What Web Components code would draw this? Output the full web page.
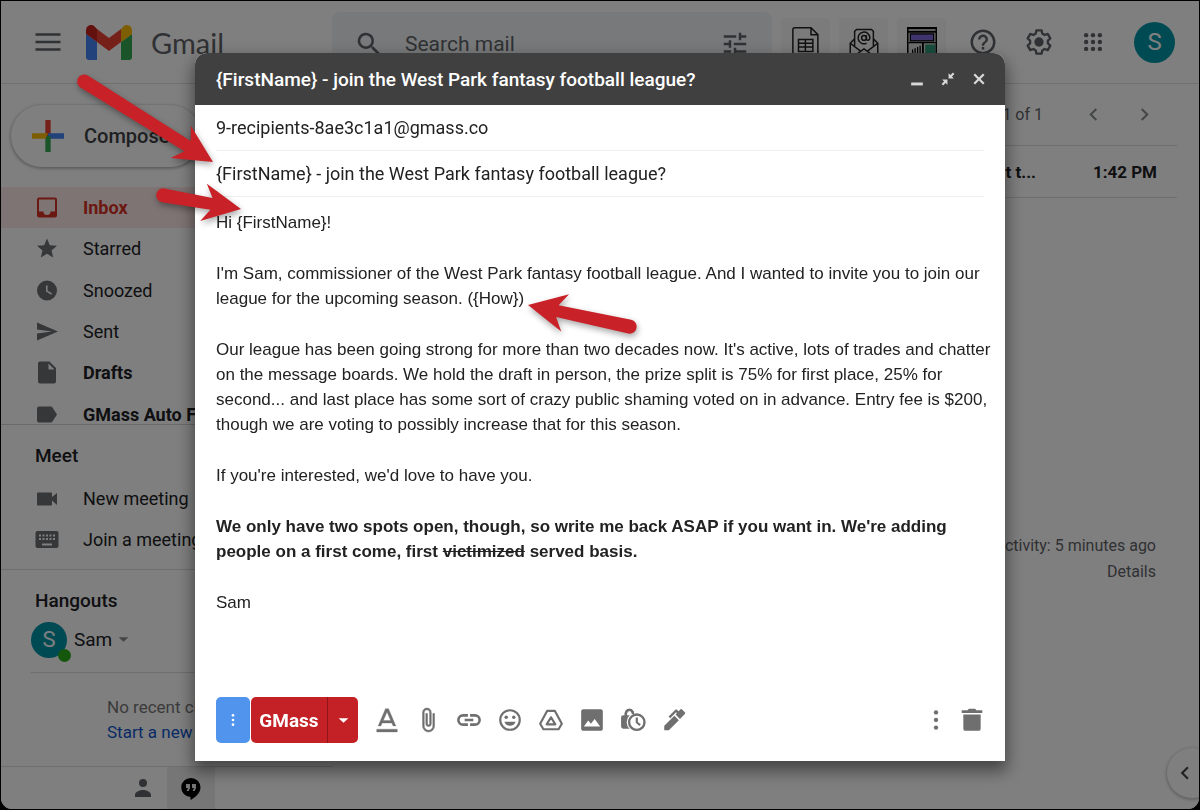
<!DOCTYPE html>
<html lang="en">
<head>
<meta charset="utf-8">
<meta name="viewport" content="width=device-width, initial-scale=1">
<title>Gmail</title>
<style>
  html, body { height: 100%; margin: 0; background: #000; }
  body { font-family: Roboto, "Liberation Sans", sans-serif; font-size: 18px; color: #202124; }
</style>
</head>
<body>
<mail-app>
  <app-header slot="header"></app-header>
  <side-bar slot="side"></side-bar>
  <mail-list slot="main"></mail-list>
  <compose-window slot="overlay" heading="{FirstName} - join the West Park fantasy football league?" to="9-recipients-8ae3c1a1@gmass.co">
    <p>Hi {FirstName}!</p>
    <p>I'm Sam, commissioner of the West Park fantasy football league. And I wanted to invite you to join our league for the upcoming season. ({How})</p>
    <p>Our league has been going strong for more than two decades now. It's active, lots of trades and chatter on the message boards. We hold the draft in person, the prize split is 75% for first place, 25% for second... and last place has some sort of crazy public shaming voted on in advance. Entry fee is $200, though we are voting to possibly increase that for this season.</p>
    <p>If you're interested, we'd love to have you.</p>
    <p><b>We only have two spots open, though, so write me back ASAP if you want in. We're adding people on a first come, first <s>victimized</s> served basis.</b></p>
    <p>Sam</p>
  </compose-window>
  <pointer-arrows slot="overlay"></pointer-arrows>
</mail-app>

<script>
const ICONS = {
  menu: '<path d="M2 5h20v2H2zM2 11h20v2H2zM2 17h20v2H2z"/>',
  search: '<path d="M15.500 14h-.8l-.3-.3A6.500 6.500 0 1 0 13.700 14.400l.3.3v.8l5 5 1.500-1.500zM9.500 14a4.500 4.500 0 1 1 0-9 4.500 4.500 0 0 1 0 9z"/>',
  tune: '<path d="M3 17v2h6v-2H3zM3 5v2h10V5H3zm10 16v-2h8v-2h-8v-2h-2v6h2zM7 9v2H3v2h4v2h2V9H7zm14 4v-2H11v2h10zm-6-4h2V7h4V5h-4V3h-2v6z"/>',
  help: '<path d="M11 18h2v-2h-2v2zm1-16a10 10 0 1 0 0 20 10 10 0 0 0 0-20zm0 18a8 8 0 1 1 0-16 8 8 0 0 1 0 16zm0-14a4 4 0 0 0-4 4h2a2 2 0 1 1 4 0c0 2-3 1.750-3 5h2c0-2.250 3-2.500 3-5a4 4 0 0 0-4-4z"/>',
  gear: '<g transform="translate(0 -1)"><path fill="none" stroke="currentColor" stroke-width="2" stroke-linejoin="round" d="M9.800 3h4.400l.6 2.800 2 1.200 2.700-.9 2.200 3.800-2.100 1.900v2.400l2.100 1.900-2.200 3.800-2.700-.9-2 1.200-.6 2.800H9.800l-.6-2.800-2-1.200-2.700.9-2.200-3.800 2.100-1.900v-2.400L2.300 9.900l2.200-3.800 2.700.9 2-1.200z"/><circle cx="12" cy="13" r="4"/></g>',
  apps: '<circle cx="4.500" cy="4.500" r="2.400"/><circle cx="12" cy="4.500" r="2.400"/><circle cx="19.500" cy="4.500" r="2.400"/><circle cx="4.500" cy="12" r="2.400"/><circle cx="12" cy="12" r="2.400"/><circle cx="19.500" cy="12" r="2.400"/><circle cx="4.500" cy="19.500" r="2.400"/><circle cx="12" cy="19.500" r="2.400"/><circle cx="19.500" cy="19.500" r="2.400"/>',
  inbox: '<path d="M20 2H4a2 2 0 0 0-2 2v16c0 1.100.9 2 2 2h16a2 2 0 0 0 2-2V4a2 2 0 0 0-2-2zm0 14h-4.500a3.500 3.500 0 0 1-7 0H4V4h16z"/>',
  star: '<path d="M12 17.300 18.200 21l-1.640-7.030L22 9.240l-7.190-.61L12 2 9.190 8.630 2 9.240l5.460 4.730L5.820 21z"/>',
  clock: '<path d="M12 2a10 10 0 1 0 0 20 10 10 0 0 0 0-20zm4.200 14.200L11 13V7h1.600v5.200l4.400 2.600z"/>',
  send: '<path d="M2 21 23 12 2 3v7l15 2-15 2z"/>',
  draft: '<path d="M5 1a2 2 0 0 0-2 2v18c0 1.100.9 2 2 2h14a2 2 0 0 0 2-2V7.500L14.500 1zm8.500 8V3l6 6z"/>',
  label: '<path d="M17.600 5.200A2 2 0 0 0 16 4H4a2 2 0 0 0-2 2v12c0 1.100.9 2 2 2h12a2 2 0 0 0 1.600-1.200L22 12z"/>',
  video: '<path d="M17 10.500V7a1 1 0 0 0-1-1H3a1 1 0 0 0-1 1v11c0 .55.45 1 1 1h13a1 1 0 0 0 1-1v-4l5 4.500v-12z"/>',
  keyboard: '<path d="M21.500 3.500h-19A2 2 0 0 0 .5 5.500v13c0 1.100.9 2 2 2h19a2 2 0 0 0 2-2v-13a2 2 0 0 0-2-2zM11 7h2v2h-2zm0 3.500h2v2h-2zM7.500 7h2v2h-2zm0 3.500h2v2h-2zM6 12.500H4v-2h2zM6 9H4V7h2zm11 9H7v-2h10zm-.5-5.500h-2v-2h2zm0-3.500h-2V7h2zm3.500 3.500h-2v-2h2zM20 9h-2V7h2z"/>',
  caret: '<path d="M3 8l9 8 9-8z"/>',
  person: '<path d="M12 11a4 4 0 1 0 0-8 4 4 0 0 0 0 8zm0 3c-3 0-8 1.500-8 5v2h16v-2c0-3.500-5-5-8-5z"/>',
  hangouts: '<path d="M12 2a9.500 9.500 0 0 0-.5 19v3c4.700-2.300 10-7 10-12.500A9.500 9.500 0 0 0 12 2zm-1 10-1.300 3H7.700L9 12H7V8h4zm6 0-1.300 3h-2l1.300-3h-2V8h4z"/>',
  left: '<path d="M15.400 7.400 14 6l-6 6 6 6 1.400-1.400L10.800 12z"/>',
  right: '<path d="M10 6 8.600 7.400l4.600 4.600-4.600 4.600L10 18l6-6z"/>',
  minimize: '<path d="M2 18h20v5H2z"/>',
  shrink: '<path d="M13 2v9h9l-3.200-3.200L23 3.500 20.500 1l-4.300 4.200zM11 22v-9H2l3.200 3.200L1 20.500 3.500 23l4.300-4.200z"/>',
  close: '<path d="M21.500 5.200 18.800 2.500 12 9.300 5.200 2.500 2.500 5.200 9.300 12l-6.800 6.800 2.700 2.700 6.800-6.800 6.800 6.800 2.700-2.700-6.800-6.800z"/>',
  format: '<path d="M2.500 20.500h19V23h-19zM7.500 14.800h9l1.100 2.700h2.600L13.400 1.500h-2.800L3.800 17.500h2.600zM12 4.600l3.400 7.900H8.600z" stroke="currentColor" stroke-width=".3"/>',
  clip: '<path d="M16.500 6v11.500a4 4 0 0 1-8 0V5a2.500 2.500 0 0 1 5 0v10.500a1 1 0 0 1-2 0V6H10v9.500a2.500 2.500 0 0 0 5 0V5a4 4 0 0 0-8 0v12.500a5.500 5.500 0 0 0 11 0V6z" stroke="currentColor" stroke-width=".5"/>',
  link: '<path d="M3.400 12A3.100 3.100 0 0 1 6.500 8.900H11V6.500H6.500a5.500 5.500 0 0 0 0 11H11v-2.400H6.500A3.100 3.100 0 0 1 3.400 12zM8 13.200h8v-2.400H8zm9.500-6.700H13v2.400h4.500a3.100 3.100 0 0 1 0 6.200H13v2.400h4.500a5.500 5.500 0 0 0 0-11z"/>',
  smile: '<path d="M12 2a10 10 0 1 0 0 20 10 10 0 0 0 0-20zm0 18a8 8 0 1 1 0-16 8 8 0 0 1 0 16z"/><circle cx="8.500" cy="9.500" r="1.600"/><circle cx="15.500" cy="9.500" r="1.600"/><path d="M6.800 13.500h10.400a5.500 5.500 0 0 1-10.400 0z"/>',
  drive: '<g fill="none" stroke="currentColor" stroke-width="2" stroke-linejoin="round"><path d="M8.500 3.500h7L22 15.500 19 20.500H5L2 15.500z"/><path d="M12 9.500l4 6.500H8z"/></g>',
  image: '<path d="M22 20V4a2 2 0 0 0-2-2H4a2 2 0 0 0-2 2v16c0 1.100.9 2 2 2h16a2 2 0 0 0 2-2zM4.500 18l4-5.500 2.500 3 3.500-4.500 5 7z"/>',
  lock: '<path d="M3 7.500h1.300V6a4.400 4.400 0 0 1 8.800 0v1.500h1.400a2 2 0 0 1 2 2V20H3a2 2 0 0 1-2-2V9.500a2 2 0 0 1 2-2zm3.500 0h4.400V6a2.200 2.200 0 0 0-4.400 0z"/><circle cx="15.500" cy="14" r="9.300" fill="#fff"/><path d="M15.500 5.800a8.200 8.200 0 1 0 0 16.400 8.200 8.200 0 0 0 0-16.400zm0 14.200a6 6 0 1 1 0-12 6 6 0 0 1 0 12zM14.500 9.800h2v4l2.700 2.200-1.200 1.500-3.500-2.900z"/><path d="M4.300 7.500V6a4.400 4.400 0 0 1 8.800 0v.5h-2.200V6a2.200 2.200 0 0 0-4.400 0v1.500z"/>',
  pen: '<path d="M3 21.500v-4.200L12.300 8l4.200 4.200L7.200 21.500zM13.400 7l1.300-1.300-.8-.8-5.400 5.400L7 8.800 13 2.800c.6-.6 1.400-.6 2 0l1.200 1.200 1.700-1.700c.5-.5 1-.5 1.500 0L22 4.900c.5.500.5 1 0 1.500l-4.500 4.700z"/>',
  dots: '<circle cx="12" cy="5" r="2"/><circle cx="12" cy="12" r="2"/><circle cx="12" cy="19" r="2"/>',
  trash: '<path d="M4 7h16v13a2 2 0 0 1-2 2H6a2 2 0 0 1-2-2zM2.500 3h5.500l1-1.500h6L16 3h5.500v2.500h-19z"/>',
  sheet: '<g fill="none" stroke="#222" stroke-width="1.200"><path d="M1.500 24V2C1.500 1 2 .6 3 .6h13l5.500 5.500V24M16 .6v5.500h5.500M6 10h11.500v9.500H6zM6 13h11.500M6 16h11.500M11.500 10v9.500"/></g>',
  atmail: '<g fill="none" stroke="#222" stroke-width="1.200"><path d="M4.500 9.500 1 13v11M19.500 9.500 23 13v11M4.500 15V3.500L6 2h12l1.500 1.500V15M1 13l8.500 6.500M23 13l-8.500 6.500M3 24l9-6.500 9 6.500"/><circle cx="12" cy="8.700" r="1.900"/><path d="M13.900 6.500v3c0 1.700 2.800 1.400 2.800-1A4.700 4.700 0 1 0 14 13"/></g>',
  board: '<path fill="#000" d="M0 0h24v24H0z"/><path fill="#bbb" d="M1.200 1.500h21.600v1.700H1.200z"/><path fill="#ddd" d="M1.200 4.500h21.600V24H1.200z"/><path fill="#000" d="M2.200 5h19.600v6.500H2.200zM1.200 12h21.600v1H1.200zM12 13h1.500v11H12z"/><path fill="#7f6ad8" d="M3.200 6h17.600v4.500H3.200z"/><path fill="#319c7c" d="M14.500 14h8v9h-8z"/><path fill="#000" d="M4 18h1v4H4zM6 17h1v5H6zM8 16h1v6H8zM10 15h1v7h-1z"/>',
  plus: '<path fill="#ea4335" d="M10 0h4v12h-4z"/><path fill="#4285f4" d="M12 10h12v4H12z"/><path fill="#34a853" d="M10 12h4v12h-4z"/><path fill="#fbbc04" d="M0 10h12l-2 4H0z"/>'
};

class BaseElement extends HTMLElement {
  constructor() {
    super();
    this.attachShadow({ mode: 'open' });
  }

  connectedCallback() {
    const template = document.createElement('template');
    template.innerHTML = `<style>${this.reset()}${this.getStyles()}</style>${this.getTemplate()}`;
    this.shadowRoot.appendChild(template.content.cloneNode(true));
  }

  reset() {
    return `
      * { box-sizing: border-box; }
      button { display: flex; align-items: center; justify-content: center; border: 0; padding: 0; background: none; font: inherit; color: inherit; cursor: pointer; }
      input { border: 0; outline: 0; padding: 0; background: none; font: inherit; color: inherit; min-width: 0; }
      a { color: inherit; text-decoration: none; }
      h2, p, ul { margin: 0; padding: 0; list-style: none; }
    `;
  }
}

class GIcon extends BaseElement {
  getStyles() {
    return `
      :host { display: block; flex: none; width: var(--size, 26px); height: var(--size, 26px); }
      svg { display: block; width: 100%; height: 100%; fill: currentColor; overflow: hidden; }
    `;
  }
  getTemplate() {
    return `<svg viewBox="0 0 24 24" aria-hidden="true">${ICONS[this.getAttribute('name')]}</svg>`;
  }
}

class MailApp extends BaseElement {
  getStyles() {
    return `
      :host { display: block; height: 100%; min-height: 700px; padding: 1px; box-sizing: border-box; }
      .window { position: relative; height: 100%; display: grid; grid-template: 83px 1fr / 332px 1fr; background: #fff; border-radius: 0 0 11px 11px; overflow: hidden; }
      slot[name=header] { display: block; grid-column: 1 / -1; }
      ::slotted([slot=side]), ::slotted([slot=main]) { min-height: 0; }
      .scrim { position: absolute; inset: 0; background: rgba(0, 0, 0, .5); }
    `;
  }
  getTemplate() {
    return `
      <div class="window">
        <slot name="header"></slot>
        <slot name="side"></slot>
        <slot name="main"></slot>
        <div class="scrim"></div>
      </div>
      <slot name="overlay"></slot>
    `;
  }
}

class AppHeader extends BaseElement {
  getStyles() {
    return `
      :host { display: block; height: 83px; color: #5f6368; }
      header { height: 83px; display: grid; grid-template-columns: 331px 1fr auto; border-bottom: 1px solid #e0e0e0; }
      .brand { display: flex; align-items: center; padding-left: 32px; }
      .brand g-icon { --size: 30px; }
      .brand a { display: flex; align-items: center; gap: 19px; margin-left: 23px; font: 29px Lato, Roboto, sans-serif; }
      .brand svg { width: 46px; height: 35px; }
      form { display: flex; align-items: center; height: 63px; margin-top: 11px; padding: 0 22px; background: #f1f3f4; border-radius: 8px; --size: 30px; }
      input { flex: 1; margin: 0 12px 0 21px; font: 21px Roboto, sans-serif; }
      input::placeholder { color: #5f6368; opacity: 1; }
      .tools { display: flex; align-items: center; padding: 0 24px 0 9px; }
      .ext { width: 49px; height: 49px; margin: 0 9px 0 0; background: #f7f7f7; border-radius: 4px; --size: 30px; }
      .tool { width: 56px; height: 56px; --size: 30px; }
      .gear { --size: 28px; }
      .grid { width: 52px; --size: 22px; }
      .avatar { width: 41px; height: 41px; margin-left: 15px; border-radius: 50%; background: #0097a7; color: #fff; font-size: 24px; }
    `;
  }
  getTemplate() {
    return `
      <header>
        <div class="brand">
          <button aria-label="Main menu"><g-icon name="menu"></g-icon></button>
          <a href="#inbox">
            <svg viewBox="0 0 46 35" aria-hidden="true">
              <path fill="#4285f4" d="M0 9l11 8v18H3a3 3 0 0 1-3-3z"/>
              <path fill="#34a853" d="M46 9l-11 8v18h8a3 3 0 0 0 3-3z"/>
              <path fill="#ea4335" d="M11 4l12 9 12-9v13L23 26 11 17z"/>
              <path fill="#c5221f" d="M0 9V5a5 5 0 0 1 8-4l3 3v13L0 9z"/>
              <path fill="#fbbc04" d="M46 9V5a5 5 0 0 0-8-4l-3 3v13l11-8z"/>
            </svg>
            <span>Gmail</span>
          </a>
        </div>
        <form role="search">
          <g-icon name="search"></g-icon>
          <input type="text" placeholder="Search mail" aria-label="Search mail">
          <button type="button" aria-label="Search options"><g-icon name="tune"></g-icon></button>
        </form>
        <div class="tools">
          <button class="ext" aria-label="Connect to a sheet"><g-icon name="sheet"></g-icon></button>
          <button class="ext" aria-label="Build a list"><g-icon name="atmail"></g-icon></button>
          <button class="ext" aria-label="Dashboard"><g-icon name="board"></g-icon></button>
          <button class="tool" aria-label="Support"><g-icon name="help"></g-icon></button>
          <button class="tool gear" aria-label="Settings"><g-icon name="gear"></g-icon></button>
          <button class="tool grid" aria-label="Apps"><g-icon name="apps"></g-icon></button>
          <button class="avatar" aria-label="Account">S</button>
        </div>
      </header>
    `;
  }
}

class NavItem extends BaseElement {
  getStyles() {
    return `
      :host { display: block; min-height: 0; --size: 26px; }
      a { display: flex; align-items: center; gap: 23px; height: 100%; padding-left: 34px; white-space: nowrap; }
      g-icon { --size: 25px; padding-right: 1px; color: #6b6e72; }
      :host([strong]) a { font-weight: 700; }
      :host([active]) a { background: #fce8e6; color: #d93025; font-weight: 700; border-radius: 0 21px 21px 0; }
      :host([active]) g-icon { color: #d93025; }
    `;
  }
  getTemplate() {
    return `<a href="#"><g-icon name="${this.getAttribute('icon')}"></g-icon><slot></slot></a>`;
  }
}

class SideBar extends BaseElement {
  getStyles() {
    return `
      :host { display: flex; flex-direction: column; }
      .compose { justify-content: flex-start; align-self: flex-start; height: 62px; margin: 21px 0 20px 10px; padding: 0 32px 0 21px; gap: 20px; border-radius: 31px; background: #fff; box-shadow: 0 1px 3px 1px rgba(60, 64, 67, .35); font: 500 20px Roboto, sans-serif; --size: 32px; color: #3c4043; }
      .folders { height: 238px; overflow: hidden; border-bottom: 1px solid #d5d5d5; flex: none; }
      .folders div { height: 248px; display: grid; grid-template-rows: repeat(6, 1fr); }
      section { flex: none; border-bottom: 1px solid #dcdcdc; }
      h2 { padding-left: 34px; font: 500 19px/24px Roboto, sans-serif; }
      .meet { height: 145px; padding-top: 19px; }
      .meet div { display: grid; grid-auto-rows: 41px; margin-top: 10px; }
      .hangouts { flex: 1; padding-top: 19px; }
      .user { display: flex; align-items: center; gap: 7px; height: 60px; margin-left: 30px; padding-bottom: 6px; border-bottom: 1px solid #dcdcdc; font-size: 19px; }
      .user button { gap: 5px; }
      .user g-icon { --size: 13px; color: #888; }
      .avatar { position: relative; width: 36px; height: 36px; display: grid; place-items: center; border-radius: 50%; background: #0097a7; color: #fff; font-size: 22px; }
      .avatar i { position: absolute; right: -4px; bottom: -4px; width: 13px; height: 13px; border-radius: 50%; background: #2bb01a; }
      .empty { padding: 22px 0 0 106px; font-size: 17px; line-height: 25px; color: #777; }
      .empty a { color: #1155cc; }
      .tabs { flex: none; display: flex; height: 42px; padding-left: 118px; }
      .tabs button { width: 48px; --size: 24px; color: #5f6368; }
      .tabs .on { background: #ececec; color: #000; }
    `;
  }
  getTemplate() {
    return `
      <button class="compose"><g-icon name="plus"></g-icon>Compose</button>
      <nav class="folders"><div>
        <nav-item icon="inbox" active>Inbox</nav-item>
        <nav-item icon="star">Starred</nav-item>
        <nav-item icon="clock">Snoozed</nav-item>
        <nav-item icon="send">Sent</nav-item>
        <nav-item icon="draft" strong>Drafts</nav-item>
        <nav-item icon="label" strong>GMass Auto F</nav-item>
      </div></nav>
      <section class="meet">
        <h2>Meet</h2>
        <div>
          <nav-item icon="video">New meeting</nav-item>
          <nav-item icon="keyboard">Join a meeting</nav-item>
        </div>
      </section>
      <section class="hangouts">
        <h2>Hangouts</h2>
        <div class="user">
          <span class="avatar">S<i></i></span>
          <button>Sam<g-icon name="caret"></g-icon></button>
        </div>
        <div class="empty">
          <p>No recent ch</p>
          <a href="#chat">Start a new</a>
        </div>
      </section>
      <div class="tabs">
        <button aria-label="Contacts"><g-icon name="person"></g-icon></button>
        <button class="on" aria-label="Conversations"><g-icon name="hangouts"></g-icon></button>
      </div>
    `;
  }
}

class MailList extends BaseElement {
  getStyles() {
    return `
      :host { display: flex; flex-direction: column; position: relative; color: #5f6368; font-size: 16px; }
      .pager { display: flex; justify-content: flex-end; align-items: center; height: 61px; margin-right: 22px; padding-right: 7px; --size: 25px; }
      .pager button { width: 51px; height: 40px; color: #8a8d91; }
      .pager span { margin-right: 25px; }
      table { width: calc(100% - 22px); border-collapse: collapse; }
      td { height: 52px; padding: 0 20px 0 0; border: solid #dcdcdc; border-width: 1px 0; text-align: right; font-size: 17px; font-weight: 700; color: #202124; }
      td:last-child { width: 121px; }
      .activity { margin-top: 335px; padding-right: 43px; text-align: right; line-height: 26px; }
      .panel { position: absolute; right: -18px; bottom: 11px; width: 50px; height: 50px; border-radius: 50%; background: #fff; box-shadow: 0 1px 3px 1px rgba(60, 64, 67, .3); justify-content: flex-start; padding-left: 5px; color: #444; }
    `;
  }
  getTemplate() {
    return `
      <div class="pager">
        <span>1 of 1</span>
        <button aria-label="Newer"><g-icon name="left"></g-icon></button>
        <button aria-label="Older"><g-icon name="right"></g-icon></button>
      </div>
      <table><tr><td>t t...</td><td>1:42 PM</td></tr></table>
      <div class="activity">
        <p>activity: 5 minutes ago</p>
        <a href="#details">Details</a>
      </div>
      <button class="panel" aria-label="Show side panel"><g-icon name="left"></g-icon></button>
    `;
  }
}

class ComposeWindow extends BaseElement {
  getStyles() {
    return `
      :host { position: fixed; inset: 0; display: flex; justify-content: center; padding: 53px 20px 49px; }
      .box { display: flex; flex-direction: column; width: 100%; max-width: 810px; background: #fff; border-radius: 12px 12px 0 0; box-shadow: 0 8px 16px 2px rgba(0, 0, 0, .45); color: #222; }
      .bar { display: flex; align-items: center; flex: none; height: 52px; padding: 0 11px 0 21px; background: #404040; border-radius: 12px 12px 0 0; color: #fff; font: 500 19px Roboto, sans-serif; }
      .bar h2 { flex: 1; font: inherit; }
      .bar button { width: 31px; height: 31px; --size: 14px; color: #d8d8d8; }
      .field { display: flex; flex: none; height: 46px; margin: 0 21px; border-bottom: 1px solid #eee; }
      .field input { flex: 1; }
      .body { flex: 1; padding: 13px 5px 0 21px; outline: 0; font: 17px/25px "Liberation Sans", Arial, sans-serif; }
      ::slotted(p) { margin: 0 0 26px; }
      .foot { display: flex; align-items: center; flex: none; padding: 0 21px 18px; color: #6f6f6f; }
      .foot > button { width: 41px; height: 41px; }
      .foot > .more { width: 34px; height: 46px; margin-right: 1px; border-radius: 5px; background: #5094ed; color: #fff; --size: 16px; }
      .gmass { display: flex; height: 46px; margin-right: 8px; border-radius: 5px; overflow: hidden; background: #c42126; color: #fff; font: 700 19px Roboto, sans-serif; --size: 13px; }
      .gmass button { width: 76px; }
      .gmass button + button { width: 31px; border-left: 1px solid #8f1519; }
      .gap { flex: 1; }
      .foot > .dots { width: 32px; }
      .foot > .trash { width: 24px; margin: 0 0 0 8px; }
    `;
  }
  getTemplate() {
    const heading = this.getAttribute('heading');
    return `
      <div class="box" role="dialog" aria-label="New message">
        <div class="bar">
          <h2>${heading}</h2>
          <button aria-label="Minimize"><g-icon name="minimize"></g-icon></button>
          <button aria-label="Exit full screen"><g-icon name="shrink"></g-icon></button>
          <button aria-label="Close"><g-icon name="close"></g-icon></button>
        </div>
        <div class="field"><input type="text" aria-label="To" value="${this.getAttribute('to')}"></div>
        <div class="field"><input type="text" aria-label="Subject" value="${heading}"></div>
        <div class="body"><slot></slot></div>
        <div class="foot">
          <button class="more" aria-label="GMass menu"><g-icon name="dots"></g-icon></button>
          <div class="gmass">
            <button>GMass</button>
            <button aria-label="GMass settings"><g-icon name="caret"></g-icon></button>
          </div>
          <button aria-label="Formatting options"><g-icon name="format"></g-icon></button>
          <button aria-label="Attach files"><g-icon name="clip"></g-icon></button>
          <button aria-label="Insert link"><g-icon name="link"></g-icon></button>
          <button aria-label="Insert emoji"><g-icon name="smile"></g-icon></button>
          <button aria-label="Insert from Drive"><g-icon name="drive"></g-icon></button>
          <button aria-label="Insert photo"><g-icon name="image"></g-icon></button>
          <button aria-label="Confidential mode"><g-icon name="lock"></g-icon></button>
          <button aria-label="Insert signature"><g-icon name="pen"></g-icon></button>
          <span class="gap"></span>
          <button class="dots" aria-label="More options"><g-icon name="dots"></g-icon></button>
          <button class="trash" aria-label="Discard draft"><g-icon name="trash"></g-icon></button>
        </div>
      </div>
    `;
  }
}

// Arrows are drawn pointing right with the tip at the origin.
class PointerArrows extends BaseElement {
  getStyles() {
    return `
      :host { position: absolute; top: 0; left: 0; pointer-events: none; }
      svg { display: block; fill: #c82127; filter: drop-shadow(1px 3px 3px rgba(0, 0, 0, .35)); }
    `;
  }
  arrow(x, y, angle, length) {
    return `<path transform="translate(${x} ${y}) rotate(${angle})"
      d="M0 0L-38 -19L-30 -6L-${length} -7A7 7 0 0 0 -${length} 7L-30 6L-38 19Z"/>`;
  }
  getTemplate() {
    return `
      <svg width="660" height="360" aria-hidden="true">
        ${this.arrow(213, 162, 32, 152)}
        ${this.arrow(241, 209, 10, 79)}
        ${this.arrow(528, 305, 192, 104)}
      </svg>
    `;
  }
}

customElements.define('g-icon', GIcon);
customElements.define('nav-item', NavItem);
customElements.define('app-header', AppHeader);
customElements.define('side-bar', SideBar);
customElements.define('mail-list', MailList);
customElements.define('compose-window', ComposeWindow);
customElements.define('pointer-arrows', PointerArrows);
customElements.define('mail-app', MailApp);
</script>
</body>
</html>
